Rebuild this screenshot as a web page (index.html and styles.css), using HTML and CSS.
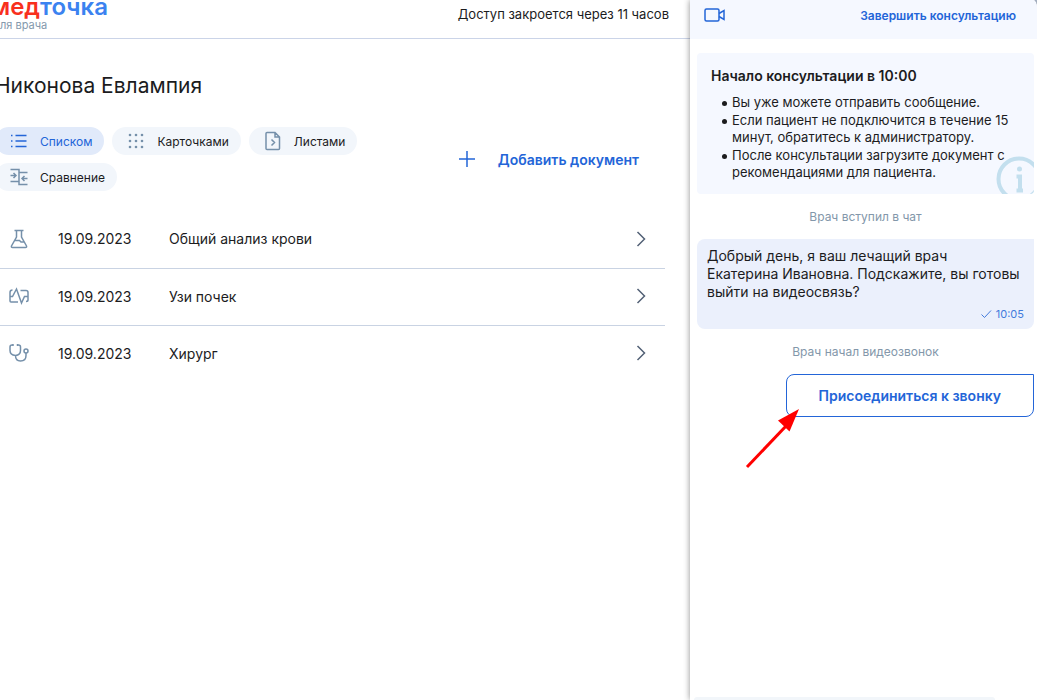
FILE: index.html
```html
<!DOCTYPE html>
<html lang="ru">
<head>
<meta charset="utf-8">
<title>Медточка для врача</title>
<link rel="stylesheet" href="styles.css">
</head>
<body>
<div class="app">
  <main class="main">
    <header class="topbar">
      <div class="brand">
        <div class="brand-name"><span class="brand-red">мед</span><span class="brand-blue">точка</span></div>
        <div class="brand-sub">для врача</div>
      </div>
      <div class="access">Доступ закроется через 11 часов</div>
    </header>
    <h1 class="patient">Никонова Евлампия</h1>
    <div class="toolbar">
      <div class="views">
        <button class="chip chip-active" type="button">
          <svg class="icon" viewBox="0 0 20 20"><path d="M6.500 4.500h11M6.500 10h11M6.500 15.500h11"/><path d="M2 4.500h1.500M2 10h1.500M2 15.500h1.500"/></svg>
          Списком
        </button>
        <button class="chip" type="button">
          <svg class="icon icon-dots" viewBox="0 0 20 20"><circle cx="4" cy="4" r="1.300"/><circle cx="10" cy="4" r="1.300"/><circle cx="16" cy="4" r="1.300"/><circle cx="4" cy="10" r="1.300"/><circle cx="10" cy="10" r="1.300"/><circle cx="16" cy="10" r="1.300"/><circle cx="4" cy="16" r="1.300"/><circle cx="10" cy="16" r="1.300"/><circle cx="16" cy="16" r="1.300"/></svg>
          Карточками
        </button>
        <button class="chip" type="button">
          <svg class="icon" viewBox="0 0 20 20"><path d="M4 1.500h8l4.500 4.500v11.500q0 1-1 1H4q-1 0-1-1v-15q0-1 1-1zM12 1.500v4.500h4.500M8.500 8.500l3 3-3 3"/></svg>
          Листами
        </button>
        <button class="chip" type="button">
          <svg class="icon" viewBox="0 0 20 20"><path d="M1.500 2.500H10v12H1.500M10 5.500h8.500M10 14.500v3h8.500M1.500 8.500h5M4.500 6l2.500 2.500L4.500 11M18.500 11.500h-5M15.500 9L13 11.500l2.500 2.500"/></svg>
          Сравнение
        </button>
      </div>
      <button class="add" type="button">
        <svg class="icon" viewBox="0 0 20 20"><path d="M10 2v16M2 10h16"/></svg>
        Добавить документ
      </button>
    </div>
    <table class="docs">
      <tbody>
        <tr>
          <td class="col-type"><svg class="icon" viewBox="0 0 20 20"><path d="M5.500 1.500h9M7.500 1.500V8L2.500 17q-.5 1.500 1 1.500h13q1.500 0 1-1.500L12.500 8V1.500M5.500 11.500h5l1.500 1.500h3"/></svg></td>
          <td class="col-date">19.09.2023</td>
          <td>Общий анализ крови</td>
          <td class="col-open"><svg class="icon" viewBox="0 0 20 20"><path d="M6.500 3l7 7-7 7"/></svg></td>
        </tr>
        <tr>
          <td class="col-type"><svg class="icon" viewBox="0 0 20 20"><path d="M3.500 4Q1 4 1 6.500V15q0 1 1 1h7M1 10.500h2.500L7.500 3l5 14 3-6.500h3.500M11.500 4.500H17q2 0 2 2V14q0 1.500-2 1.500"/></svg></td>
          <td class="col-date">19.09.2023</td>
          <td>Узи почек</td>
          <td class="col-open"><svg class="icon" viewBox="0 0 20 20"><path d="M6.500 3l7 7-7 7"/></svg></td>
        </tr>
        <tr>
          <td class="col-type"><svg class="icon" viewBox="0 0 20 20"><path d="M4 2H3Q1 2 1 4v3.500Q1 12 6.500 12.500 11.500 12 11.500 7.500V4q0-2-2-2h-1M4 1v2M8.500 1v2M6.500 12.500q0 5.500 5 5.500 5.500 0 5.500-5.500V10"/><circle cx="17" cy="8" r="2"/></svg></td>
          <td class="col-date">19.09.2023</td>
          <td>Хирург</td>
          <td class="col-open"><svg class="icon" viewBox="0 0 20 20"><path d="M6.500 3l7 7-7 7"/></svg></td>
        </tr>
      </tbody>
    </table>
  </main>
  <aside class="chat">
    <header class="chat-head">
      <svg class="camera" viewBox="0 0 22 14"><rect x="1" y="1" width="14" height="12" rx="1.500"/><path d="M15 5.500l5-3v9l-5-3"/></svg>
      <button class="finish" type="button">Завершить консультацию</button>
    </header>
    <div class="feed">
      <section class="notice">
        <svg class="info" viewBox="0 0 46 46"><circle cx="23" cy="23" r="20.500"/><path d="M20.500 20.500H24V34M20.500 34.500H27"/><circle class="info-dot" cx="23.500" cy="13" r="2.500"/></svg>
        <h2 class="notice-title">Начало консультации в 10:00</h2>
        <ul class="notice-list">
          <li>Вы уже можете отправить сообщение.</li>
          <li>Если пациент не подключится в течение 15 минут, обратитесь к администратору.</li>
          <li>После консультации загрузите документ с рекомендациями для пациента.</li>
        </ul>
      </section>
      <p class="event">Врач вступил в чат</p>
      <article class="message">
        <p class="message-text">Добрый день, я ваш лечащий врач<br>Екатерина Ивановна. Подскажите, вы готовы выйти на видеосвязь?</p>
        <div class="message-meta">
          <svg class="tick" viewBox="0 0 12 12"><path d="M1.500 6.500l3 3 6.500-7"/></svg>
          <time>10:05</time>
        </div>
      </article>
      <p class="event">Врач начал видеозвонок</p>
      <div class="call">
        <button class="join" type="button">Присоединиться к звонку</button>
        <svg class="pointer" viewBox="0 0 56 60"><path class="pointer-line" d="M2 58L42 16"/><path class="pointer-head" d="M54 0L33 11.500L44.500 22.500z"/></svg>
      </div>
    </div>
    <div class="composer"></div>
  </aside>
</div>
</body>
</html>
```
FILE: styles.css
```css
* {
  box-sizing: border-box;
}

body {
  margin: 0;
  overflow: hidden;
  background: #b9c6da;
  color: #1c1c1e;
  font-family: Inter, "Liberation Sans", sans-serif;
  font-size: 14px;
}

h1, h2, p, ul {
  margin: 0;
  padding: 0;
}

button {
  border: 0;
  background: none;
  font: inherit;
  color: inherit;
  cursor: pointer;
}

.app {
  display: flex;
  height: 100vh;
}

.icon {
  flex: none;
  display: block;
  width: 20px;
  height: 20px;
  fill: none;
  stroke: #7590aa;
  stroke-width: 1.500;
}

.main {
  flex: 1;
  min-width: 0;
  background: #fff;
}

.topbar {
  display: flex;
  justify-content: space-between;
  height: 39px;
  padding-right: 21px;
  border-bottom: 1px solid #cbd4e8;
}

.brand {
  margin-left: -9px;
}

.brand-name {
  margin-top: -5px;
  font-size: 24px;
  line-height: 24px;
  font-weight: 600;
}

.brand-red {
  color: #f8301d;
}

.brand-blue {
  color: #3b82f0;
}

.brand-sub {
  margin-left: 2px;
  font-size: 11px;
  line-height: 12px;
  color: #8499ad;
}

.access {
  font-size: 13px;
  line-height: 28px;
}

.patient {
  margin: 32px 0 0 -5px;
  font-size: 21px;
  line-height: 30px;
  font-weight: 400;
}

.toolbar {
  display: flex;
  justify-content: space-between;
  align-items: center;
  margin: 26px 51px 0 -5px;
}

.views {
  display: flex;
  flex-wrap: wrap;
  gap: 8px;
  width: 380px;
}

.chip {
  display: flex;
  align-items: center;
  gap: 11px;
  height: 28px;
  padding: 0 12px 0 14px;
  border-radius: 14px;
  background: #f2f6fb;
  font-size: 12px;
}

.chip-active {
  background: #e1eafa;
  color: #2365d8;
}

.chip-active .icon,
.add .icon {
  stroke: #2365d8;
}

.icon.icon-dots {
  fill: #7590aa;
  stroke: none;
}

.add {
  display: flex;
  align-items: center;
  gap: 21px;
  padding: 0;
  color: #2365d8;
  font-weight: 600;
}

.docs {
  width: calc(100% - 25px);
  margin-top: 20px;
  border-collapse: collapse;
  table-layout: fixed;
}

.docs td {
  height: 57px;
  padding: 0 0 1px;
}

.docs tr + tr td {
  border-top: 1px solid #c9d3e3;
}

.docs .col-type {
  width: 58px;
  padding-left: 9px;
}

.docs .col-date {
  width: 111px;
}

.docs .col-open {
  width: 34px;
}

.col-open .icon {
  stroke: #536176;
}

.chat {
  position: relative;
  display: flex;
  flex-direction: column;
  width: 347px;
  border-top-right-radius: 4px 8px;
  box-shadow: 0 0 6px rgba(0, 0, 0, 0.45);
  background: #fff;
}

.chat-head {
  display: flex;
  justify-content: space-between;
  align-items: center;
  height: 39px;
  padding: 0 21px 9px 14px;
  border-top-right-radius: 4px 8px;
  background: #f5f8ff;
}

.camera {
  width: 22px;
  height: 14px;
  fill: none;
  stroke: #2365d8;
  stroke-width: 1.500;
}

.finish {
  padding: 0;
  color: #2365d8;
  font-size: 12px;
  font-weight: 600;
}

.feed {
  flex: 1;
  padding: 14px 3px 0 7px;
}

.notice {
  position: relative;
  overflow: hidden;
  padding: 14px 20px 13px 14px;
  border-radius: 4px;
  background: #f5f8ff;
}

.notice-title {
  font-size: 14px;
  line-height: 18px;
  font-weight: 600;
}

.notice-list {
  margin-top: 9px;
  padding-left: 21px;
  list-style: none;
  font-size: 13px;
  line-height: 17px;
}

.notice-list li {
  position: relative;
}

.notice-list li + li {
  margin-top: 1px;
}

.notice-list li::before {
  content: "";
  position: absolute;
  left: -10px;
  top: 7px;
  width: 5px;
  height: 5px;
  border-radius: 50%;
  background: #1c1c1e;
}

.info {
  position: absolute;
  right: -8px;
  bottom: -8px;
  width: 46px;
  height: 46px;
  fill: none;
  stroke: #c3dfee;
  stroke-width: 4;
}

.info .info-dot {
  fill: #c3dfee;
  stroke: none;
}

.event {
  padding: 15px 0 14px;
  text-align: center;
  font-size: 12px;
  line-height: 16px;
  color: #8397aa;
}

.message {
  padding: 8px 10px 7px;
  border-radius: 8px 0 8px 8px;
  background: #ebf0fc;
}

.message-text {
  line-height: 18px;
}

.message-meta {
  display: flex;
  justify-content: flex-end;
  align-items: center;
  gap: 4px;
  margin-top: 5px;
  font-size: 11px;
  line-height: 16px;
  color: #427bdc;
}

.tick {
  width: 12px;
  height: 12px;
  fill: none;
  stroke: #427bdc;
}

.call {
  position: relative;
  display: flex;
  justify-content: flex-end;
}

.join {
  height: 43px;
  padding: 0 32px;
  border: 1px solid #2365d8;
  border-radius: 8px 0 8px 8px;
  color: #2365d8;
  font-weight: 600;
}

.pointer {
  position: absolute;
  left: 48px;
  top: 35px;
  width: 56px;
  height: 60px;
}

.pointer-line {
  stroke: #f00;
  stroke-width: 3;
}

.pointer-head {
  fill: #f00;
}

.composer {
  height: 3px;
  margin: 0 42px 0 4px;
  border-radius: 3px 3px 0 0;
  background: #f2f6fa;
}
```
